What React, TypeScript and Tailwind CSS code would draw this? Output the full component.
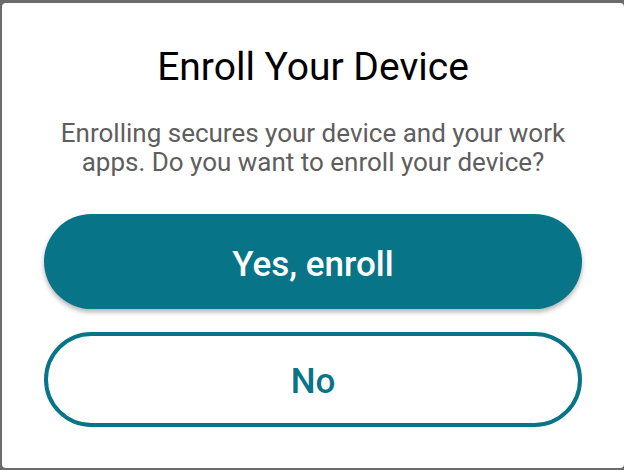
export default function App() {
  return (
    <div className="h-[470px] w-[624px] bg-[#6b6b6b] pt-[3px] pb-[2px] pl-[2px] overflow-hidden">
      <div
        className="flex h-full flex-col items-center rounded-[4px] bg-white px-[42px]"
        style={{ fontFamily: 'Roboto, "Noto Sans", sans-serif' }}
      >
        <h1 className="mt-[42px] text-[39px] leading-[44px] font-normal text-black">
          Enroll Your Device
        </h1>
        <p className="mt-[30px] text-center text-[26px] leading-[29px] text-[#5e5e5e]">
          Enrolling secures your device and your work apps. Do you want to enroll your device?
        </p>
        <button
          type="button"
          className="mt-[37px] h-[95px] w-full rounded-full bg-[#077488] pt-[8px] text-[35px] font-medium text-white shadow-[0_3px_5px_rgba(0,0,0,0.3)]"
        >
          Yes, enroll
        </button>
        <button
          type="button"
          className="mt-[23px] h-[95px] w-full rounded-full border-4 border-[#077488] bg-white pt-[5px] text-[35px] font-medium text-[#077488]"
        >
          No
        </button>
      </div>
    </div>
  );
}
